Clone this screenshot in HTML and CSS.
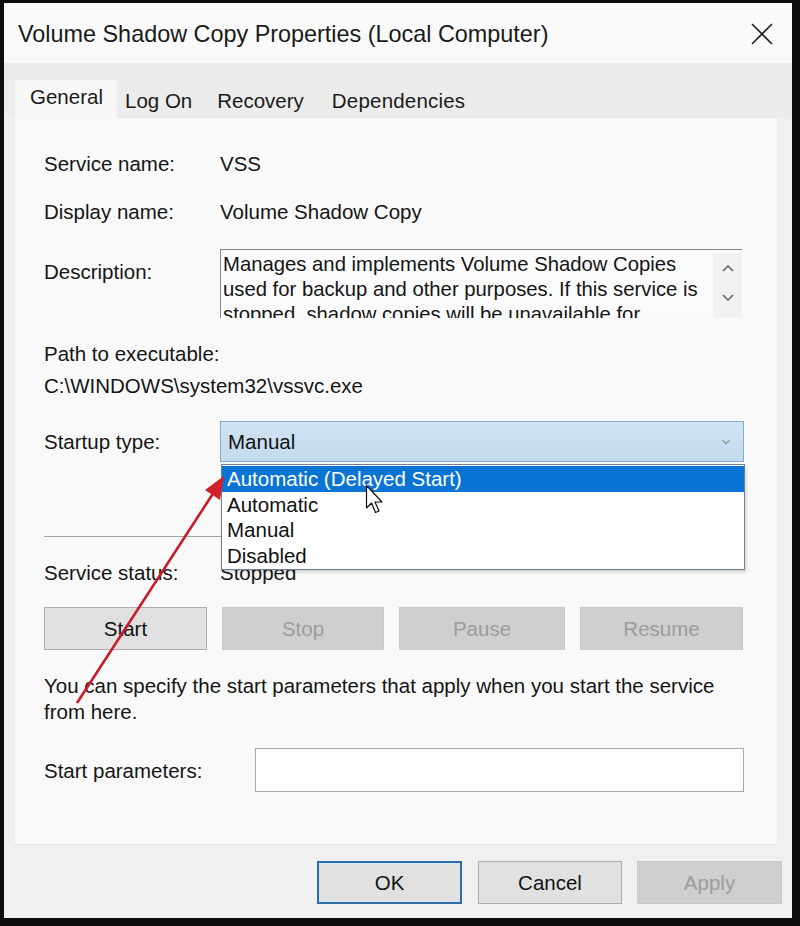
FILE: index.html
```html
<!DOCTYPE html>
<html lang="en">
<head>
<meta charset="utf-8">
<title>Volume Shadow Copy Properties</title>
<link rel="stylesheet" href="styles.css">
</head>
<body>
<div class="screen">
  <div class="window">
    <div class="titlebar">
      <span class="title">Volume Shadow Copy Properties (Local Computer)</span>
      <svg class="close" width="22" height="22" viewBox="0 0 22 22"><path d="M1 1 L21 21 M21 1 L1 21" stroke="#222" stroke-width="1.6" fill="none"/></svg>
    </div>
    <div class="tabstrip">
      <div class="tab active">General</div>
      <div class="tab first">Log On</div>
      <div class="tab">Recovery</div>
      <div class="tab last">Dependencies</div>
    </div>
    <div class="panel">
      <div class="row r-service"><div class="label">Service name:</div><div class="value">VSS</div></div>
      <div class="row r-display"><div class="label">Display name:</div><div class="value">Volume Shadow Copy</div></div>
      <div class="row r-desc">
        <div class="label desc-label">Description:</div>
        <div class="descbox">
          <div class="desctext">Manages and implements Volume Shadow Copies used for backup and other purposes. If this service is stopped, shadow copies will be unavailable for backup and the backup may fail.</div>
          <div class="scroll">
            <svg width="14" height="9" viewBox="0 0 14 9"><path d="M2 7 L7 2 L12 7" stroke="#555" stroke-width="1.4" fill="none"/></svg>
            <svg width="14" height="9" viewBox="0 0 14 9"><path d="M2 2 L7 7 L12 2" stroke="#555" stroke-width="1.4" fill="none"/></svg>
          </div>
        </div>
      </div>
      <div class="path">
        <div class="line">Path to executable:</div>
        <div class="line exe">C:\WINDOWS\system32\vssvc.exe</div>
      </div>
      <div class="row r-startup">
        <div class="label">Startup type:</div>
        <div class="combo"><span>Manual</span><svg width="10" height="6" viewBox="0 0 10 6"><path d="M1.5 1.5 L5 4.5 L8.5 1.5" stroke="#8a8a8a" stroke-width="1.1" fill="none"/></svg></div>
      </div>
      <div class="sep"></div>
      <div class="row r-status"><div class="label">Service status:</div><div class="value">Stopped</div></div>
      <div class="svcbuttons">
        <div class="btn b-start">Start</div>
        <div class="btn disabled b-stop">Stop</div>
        <div class="btn disabled b-pause">Pause</div>
        <div class="btn disabled b-resume">Resume</div>
      </div>
      <p class="hint">You can specify the start parameters that apply when you start the service<br>from here.</p>
      <div class="row r-params"><div class="label params-label">Start parameters:</div><div class="input"></div></div>

      <div class="dropdown">
        <div class="opt selected">Automatic (Delayed Start)</div>
        <div class="opt">Automatic</div>
        <div class="opt">Manual</div>
        <div class="opt">Disabled</div>
      </div>
    </div>
    <div class="footer">
      <div class="btn fbtn ok">OK</div>
      <div class="btn fbtn cancel">Cancel</div>
      <div class="btn fbtn disabled apply">Apply</div>
    </div>
  </div>
  <svg class="annot" width="800" height="926" viewBox="0 0 800 926">
    <line x1="77" y1="703" x2="214" y2="492" stroke="#c81c2a" stroke-width="2.6"/>
    <polygon points="224,476 220,500 205,490" fill="#d0202c"/>
    <path d="M366.5 485.5 L366.5 508 L371.5 503 L375.5 512.5 L379 511 L375 502 L382 502 Z" fill="#ffffff" stroke="#111" stroke-width="1.2" stroke-linejoin="round"/>
  </svg>
</div>
</body>
</html>
```
FILE: styles.css
```css
* { box-sizing: border-box; }
html, body { margin: 0; padding: 0; }
body {
  width: 800px;
  height: 926px;
  overflow: hidden;
  background: #0d0d0d;
  font-family: "Liberation Sans", Arial, sans-serif;
  font-size: 20.5px;
  color: #151515;
}
.screen {
  position: relative;
  width: 800px;
  height: 926px;
  background: #0d0d0d;
  padding: 3px 8px 8px 4px;
}
.window {
  width: 788px;
  height: 915px;
  background: #f0f0f0;
  display: flex;
  flex-direction: column;
}
.titlebar {
  height: 60px;
  background: #fafafa;
  display: flex;
  align-items: center;
  justify-content: space-between;
  padding: 3px 19px 0 14px;
}
.title {
  font-size: 23.4px;
  color: #1a1a1a;
}
.close { display: block; margin-top: -2px; }

.tabstrip {
  height: 55px;
  background: #ececec;
  display: flex;
  align-items: flex-end;
  padding-left: 11px;
}
.tab {
  height: 38px;
  display: flex;
  align-items: center;
  padding: 4px 13px 0 13px;
  color: #1a1a1a;
}
.tab.active {
  width: 102px;
  background: #f8f8f8;
  padding: 0 0 4px 15px;
}
.tab.first { padding-left: 8px; padding-right: 12px; }
.tab.last { padding-left: 15px; letter-spacing: 0.2px; }

.panel {
  position: relative;
  margin-left: 11px;
  width: 763px;
  height: 727px;
  background: #f9f9f9;
  border-right: 1px solid #ececec;
  border-bottom: 1px solid #e6e6e6;
  padding: 33px 0 0 29px;
}
.row {
  display: flex;
  align-items: center;
  line-height: 25px;
}
.label { width: 176px; flex: none; }
.r-display { margin-top: 23px; }
.r-desc { margin-top: 25px; align-items: flex-start; }
.desc-label { margin-top: 10px; }
.descbox {
  width: 522px;
  height: 69px;
  border-top: 1px solid #858585;
  border-left: 1px solid #858585;
  background: #fbfbfb;
  display: flex;
  justify-content: space-between;
  overflow: hidden;
}
.desctext {
  width: 486px;
  padding: 2px 0 0 2px;
  line-height: 25px;
  height: 68px;
  overflow: hidden;
  font-size: 20.3px;
}
.scroll {
  width: 29px;
  height: 66px;
  margin-top: 3px;
  background: #f1f1f1;
  display: flex;
  flex-direction: column;
  align-items: center;
  padding-top: 11px;
  gap: 20px;
}
.scroll svg { display: block; }
.path { margin-top: 23px; line-height: 25px; }
.path .exe { margin-top: 7px; }
.r-startup { margin-top: 23px; }
.combo {
  width: 524px;
  height: 41px;
  background: linear-gradient(#cfe3f3, #c4dbee);
  border: 1px solid #86acd2;
  display: flex;
  align-items: center;
  justify-content: space-between;
  padding: 0 12px 0 7px;
  color: #111;
}
.combo svg { display: block; }
.sep {
  margin-top: 74px;
  height: 1px;
  width: 700px;
  background: #a3a3a3;
}
.r-status { margin-top: 23px; }
.svcbuttons {
  margin-top: 22px;
  display: flex;
  gap: 15px;
}
.btn {
  height: 43px;
  display: flex;
  align-items: center;
  justify-content: center;
  background: #e1e1e1;
  border: 1px solid #adadad;
  color: #111;
}
.btn.disabled {
  background: #cfcfcf;
  border-color: #c8c8c8;
  color: #9c9c9c;
}
.b-start { width: 163px; }
.b-stop { width: 162px; }
.b-pause { width: 166px; }
.b-resume { width: 163px; }
.hint {
  margin: 23px 0 0 0;
  line-height: 26px;
}
.r-params { margin-top: 23px; }
.params-label { width: 211px; }
.input {
  width: 489px;
  height: 44px;
  background: #fdfdfd;
  border: 1px solid #a9a9a9;
}
.dropdown {
  position: absolute;
  left: 206px;
  top: 346px;
  width: 524px;
  height: 106px;
  background: #ffffff;
  border: 1px solid #6f8296;
  padding: 1px 0 0 0;
  box-shadow: 1px 2px 3px rgba(0,0,0,0.18);
}
.opt {
  height: 25.5px;
  line-height: 25.5px;
  padding-left: 5px;
  color: #111;
}
.opt.selected {
  background: #0a74d4;
  color: #ffffff;
}
.footer {
  display: flex;
  justify-content: flex-end;
  padding: 16px 10px 0 0;
  gap: 15px;
}
.fbtn { height: 43px; }
.ok {
  width: 145px;
  border: 2px solid #2e6ca8;
  box-shadow: inset 0 0 0 1px #cfe6fb;
}
.cancel { width: 144px; margin-left: 1px; }
.apply { width: 145px; background: #cccccc; border-color: #cccccc; }
.annot {
  position: absolute;
  left: 0;
  top: 0;
  pointer-events: none;
}
```
